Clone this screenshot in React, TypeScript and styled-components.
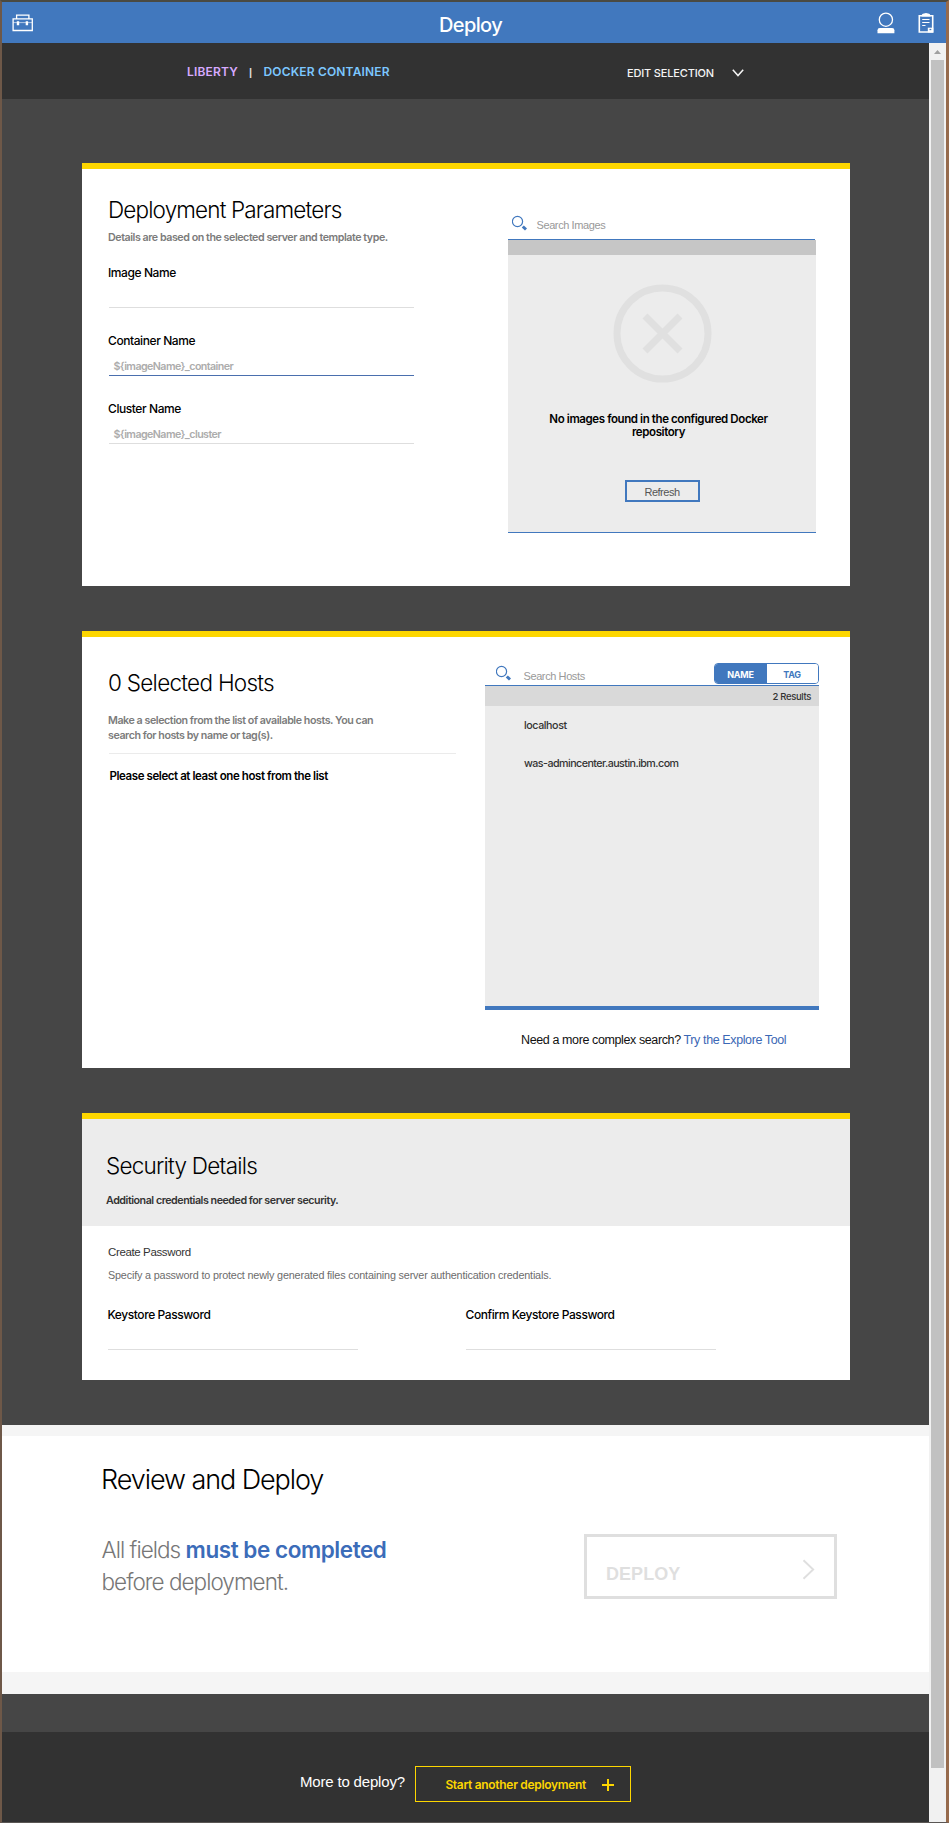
import React from "react";
import styled, { createGlobalStyle } from "styled-components";

const blue = "#4178be";
const ui = `Inter, "Liberation Sans", sans-serif`;
const plain = `"Liberation Sans", Arial, sans-serif`;

const GlobalStyle = createGlobalStyle`
  *, *::before, *::after { box-sizing: border-box; }
  body { margin: 0; background: #464646; }
  h1, h2, p { margin: 0; font-weight: inherit; }
  button { margin: 0; padding: 0; font: inherit; }
  svg { display: block; flex: none; }
`;

/* ---------- window frame ---------- */

const Window = styled.div`
  width: 949px;
  height: 1823px;
  display: flex;
  flex-direction: column;
  overflow: hidden;
  border-style: solid;
  border-width: 2px 3px 1px 2px;
  border-color: #4a4a42 #966a4c #5a5654 #6e5848;
  background: #464646;
  font-family: ${ui};
  color: #000;
`;

const Header = styled.header`
  flex: none;
  height: 41px;
  display: grid;
  grid-template-columns: 1fr auto 1fr;
  align-items: center;
  padding: 0 12px 0 10px;
  background: ${blue};
  color: #fff;
`;

const Title = styled.h1`
  font-size: 20px;
  line-height: 24px;
  font-weight: 500;
  letter-spacing: -0.62px;
  padding: 5px 5px 0 0;
`;

const HeaderActions = styled.div`
  display: flex;
  justify-content: flex-end;
  gap: 23px;
  padding-top: 1px;
`;

const Body = styled.div`
  flex: 1;
  min-height: 0;
  display: flex;
`;

const Page = styled.main`
  width: 927px;
  display: flex;
  flex-direction: column;
`;

const Scrollbar = styled.div`
  width: 17px;
  padding: 0 2px;
  background: #f1f1f1;
`;

const ScrollArrow = styled.div`
  height: 17px;
  display: flex;
  align-items: center;
  justify-content: center;
`;

const ScrollThumb = styled.div`
  height: 1708px;
  background: #c1c1c1;
`;

/* ---------- selection bar ---------- */

const SelectionBar = styled.nav`
  flex: none;
  height: 56px;
  display: flex;
  align-items: center;
  padding-left: 185px;
  background: #323232;
  font-size: 12px;
  line-height: 16px;
  font-weight: 600;
  color: #ddd;
`;

const Crumbs = styled.div`
  width: 440px;
  display: flex;
  padding-top: 1px;
  letter-spacing: 0.17px;
`;

const Crumb = styled.span<{ $color: string }>`
  color: ${(p) => p.$color};
`;

const Divider = styled.span`
  width: 25.5px;
  text-align: center;
  font-family: ${plain};
  font-size: 11px;
  font-weight: 700;
`;

const EditSelection = styled.div`
  display: flex;
  align-items: center;
  gap: 18px;
  padding-top: 3px;
  font-size: 11px;
  font-weight: 500;
  letter-spacing: -0.17px;
  color: #f5f5f5;
`;

/* ---------- cards ---------- */

const Cards = styled.div`
  flex: none;
  display: flex;
  flex-direction: column;
  gap: 45px;
  padding: 64px 79px 45px 80px;
`;

const Card = styled.section<{ $height: number }>`
  height: ${(p) => p.$height}px;
  display: flex;
  border-top: 6px solid #fdd600;
  background: #fff;
`;

const StackedCard = styled(Card)`
  flex-direction: column;
`;

const LeftColumn = styled.div<{ $width: number; $top: number }>`
  width: ${(p) => p.$width}px;
  padding: ${(p) => p.$top}px 0 0 26.5px;
`;

const RightColumn = styled.div<{ $width: number; $top: number }>`
  width: ${(p) => p.$width}px;
  padding-top: ${(p) => p.$top}px;
`;

const Heading = styled.h2<{ $track?: number }>`
  margin-left: -0.5px;
  font-size: 22.5px;
  line-height: 30px;
  font-weight: 300;
  letter-spacing: ${(p) => p.$track ?? -0.85}px;
`;

const Hint = styled.p<{ $top: number; $line?: number }>`
  margin-top: ${(p) => p.$top}px;
  margin-left: -0.5px;
  font-size: 10.7px;
  line-height: ${(p) => p.$line ?? 16}px;
  font-weight: 600;
  letter-spacing: -0.45px;
  color: #7b7b7b;
`;

const StrongHint = styled(Hint)`
  letter-spacing: -0.46px;
  color: #333;
`;

const Notice = styled.p`
  font-size: 11.5px;
  font-weight: 600;
  letter-spacing: -0.42px;
`;

/* ---------- form fields ---------- */

const Field = styled.label<{ $top: number; $width: number }>`
  display: block;
  width: ${(p) => p.$width}px;
  margin-top: ${(p) => p.$top}px;
`;

const FieldLabel = styled.span`
  display: block;
  margin-left: -0.5px;
  font-size: 12px;
  line-height: 16px;
  font-weight: 500;
  letter-spacing: -0.42px;
`;

const FieldInput = styled.span<{ $active?: boolean }>`
  display: block;
  height: 27px;
  padding: 10px 0 0 5px;
  border-bottom: 1px solid ${(p) => (p.$active ? "#4a6fae" : "#dedede")};
  font-size: 10.7px;
  line-height: 16px;
  font-weight: 600;
  letter-spacing: -0.58px;
  color: #acacac;
`;

/* ---------- search panels ---------- */

const SearchRow = styled.div<{ $width: number; $icon: number; $gap: number }>`
  width: ${(p) => p.$width}px;
  height: 30px;
  display: flex;
  padding: 5px 0 0 ${(p) => p.$icon}px;
  gap: ${(p) => p.$gap}px;
  border-bottom: 1px solid ${blue};
`;

const SearchIconBox = styled.span<{ $top: number }>`
  flex: none;
  padding-top: ${(p) => p.$top}px;
`;

const SearchText = styled.span<{ $top: number }>`
  flex: 1;
  padding-top: ${(p) => p.$top}px;
  font-family: ${plain};
  font-size: 11px;
  line-height: 16px;
  letter-spacing: -0.4px;
  color: #999;
`;

const PanelBar = styled.div`
  height: 15px;
  background: #c6c6c6;
`;

const EmptyPanel = styled.div`
  height: 278px;
  display: flex;
  flex-direction: column;
  align-items: center;
  padding-top: 29px;
  background: #ececec;
  border-bottom: 1px solid ${blue};
`;

const EmptyText = styled(Notice)`
  width: 240px;
  margin: 30px 7px 41px 0;
  line-height: 13px;
  letter-spacing: -0.4px;
  text-align: center;
`;

const RefreshButton = styled.button`
  width: 75px;
  height: 22px;
  padding-top: 2px;
  border: 2px solid ${blue};
  background: transparent;
  font-family: ${plain};
  font-size: 11px;
  line-height: 16px;
  letter-spacing: -0.5px;
  color: #555;
`;

const Rule = styled.hr`
  width: 347px;
  margin: 10px 0 14px;
  border: 0;
  border-top: 1px solid #ebebeb;
`;

const HostNotice = styled(Notice)`
  padding-left: 1px;
  line-height: 16px;
`;

const Toggle = styled.div`
  width: 105px;
  height: 21px;
  display: flex;
  margin-top: 2px;
  overflow: hidden;
  border: 1px solid ${blue};
  border-radius: 4px;
`;

const ToggleItem = styled.span<{ $on?: boolean }>`
  flex: ${(p) => (p.$on ? "0 0 52px" : "1")};
  padding-right: 1px;
  text-align: center;
  font-size: 9px;
  line-height: 21px;
  font-weight: 700;
  letter-spacing: -0.2px;
  background: ${(p) => (p.$on ? blue : "#fff")};
  color: ${(p) => (p.$on ? "#fff" : blue)};
`;

const ResultCount = styled.div`
  height: 20px;
  padding-right: 8px;
  background: #d9d9d9;
  text-align: right;
  font-size: 9.5px;
  line-height: 22px;
  font-weight: 500;
  letter-spacing: -0.36px;
  color: #333;
`;

const HostList = styled.div`
  height: 304px;
  background: #ececec;
  border-bottom: 4px solid ${blue};
`;

const Host = styled.div<{ $track: number }>`
  height: 38px;
  padding-left: 39px;
  font-size: 10.7px;
  line-height: 40px;
  font-weight: 500;
  letter-spacing: ${(p) => p.$track}px;
  color: #333;
`;

const ExploreLine = styled.p`
  margin-top: 20px;
  padding-left: 36px;
  font-family: ${plain};
  font-size: 12.5px;
  line-height: 20px;
  letter-spacing: -0.39px;
  white-space: nowrap;
  color: #111;
`;

const ExploreLink = styled.a`
  color: #3b68b5;
`;

/* ---------- security ---------- */

const SecurityHeader = styled.div`
  flex: none;
  height: 107px;
  padding: 32px 0 0 24.5px;
  background: #ececec;
`;

const SecurityBody = styled.div`
  padding: 18px 0 0 26px;
`;

const SubHeading = styled.p`
  font-family: ${plain};
  font-size: 11.5px;
  line-height: 16px;
  letter-spacing: -0.37px;
  color: #333;
`;

const SubText = styled.p`
  margin-top: 7px;
  font-family: ${plain};
  font-size: 10.8px;
  line-height: 16px;
  letter-spacing: -0.17px;
  color: #6c6c6c;
`;

const PasswordFields = styled.div`
  display: flex;
  gap: 108px;
`;

/* ---------- review ---------- */

const Review = styled.section`
  flex: none;
  height: 269px;
  padding: 26px 0 0 99.5px;
  border-top: 11px solid #f5f5f5;
  border-bottom: 22px solid #f5f5f5;
  background: #fff;
`;

const ReviewHeading = styled.h2`
  margin-left: -0.5px;
  font-size: 27px;
  line-height: 36px;
  font-weight: 300;
  letter-spacing: -1.08px;
`;

const ReviewRow = styled.div`
  display: flex;
  align-items: flex-start;
  margin-top: 36px;
`;

const ReviewText = styled.p`
  width: 482.5px;
  font-size: 22.5px;
  line-height: 32px;
  font-weight: 300;
  letter-spacing: -0.97px;
  color: #777;
`;

const Required = styled.strong`
  font-weight: 600;
  letter-spacing: -0.45px;
  color: #3b6cb9;
`;

const DeployButton = styled.button`
  width: 253px;
  height: 65px;
  display: flex;
  align-items: flex-start;
  justify-content: space-between;
  padding: 22px 19px 0 19px;
  border: 3px solid #dfdfdf;
  background: transparent;
  font-family: ${plain};
  font-size: 18px;
  line-height: 24px;
  font-weight: 700;
  letter-spacing: 0.05px;
  color: #dfdfdf;
`;

const DeployLabel = styled.span`
  padding-top: 3px;
`;

/* ---------- footer ---------- */

const Footer = styled.footer`
  flex: none;
  height: 90px;
  display: flex;
  align-items: center;
  gap: 10.5px;
  margin-top: 38px;
  padding: 14px 0 0 298px;
  background: #323232;
`;

const FooterText = styled.span`
  padding-bottom: 4px;
  font-family: ${plain};
  font-size: 15px;
  line-height: 20px;
  letter-spacing: -0.18px;
  color: #fff;
`;

const StartButton = styled.button`
  width: 216px;
  height: 36px;
  display: flex;
  align-items: center;
  gap: 16px;
  padding: 1px 0 0 29px;
  border: 1px solid #fdd600;
  background: transparent;
  font-size: 12px;
  font-weight: 600;
  letter-spacing: -0.31px;
  color: #fdd600;
`;

/* ---------- icons ---------- */

const ToolboxIcon = () => (
  <svg width="22" height="19" viewBox="0 0 22 19" fill="none" stroke="#fff" strokeWidth="1.3">
    <path d="M4.6 5.500V2.100h12.300v3.400M1.100 5.900h19.200v11.600H1.100z" />
    <path d="M1.100 9.600h19.200" strokeWidth=".8" opacity=".75" />
    <path d="M6 8.200v4M14.900 8.200v4" strokeWidth="2.400" />
  </svg>
);

const UserIcon = () => (
  <svg width="18" height="22" viewBox="0 0 18 22">
    <circle cx="8.900" cy="7.700" r="6.600" fill="none" stroke="#fff" strokeWidth="1.300" />
    <path d="M.5 21.200v-2.900q0-2.300 2.300-2.300h12.300q2.300 0 2.300 2.300v2.900z" fill="#fff" />
  </svg>
);

const ClipboardIcon = () => (
  <svg width="16" height="22" viewBox="0 0 16 22">
    <path d="M3.500 4.500q0-3 2.500-3Q8 .3 10 1.500q2.500 0 2.500 3z" fill="#fff" />
    <path d="M1.300 3.700h13.400v16.300H1.300z" fill="none" stroke="#fff" strokeWidth="1.600" />
    <path d="M4.200 7.500h7.300M4.200 10.500h7.300M4.200 13.500h3.300" stroke="#fff" strokeWidth="1.100" />
    <path d="M9.800 20.500v-4.800h5.500v4.800z" fill="#fff" />
    <path d="M11.500 17.500h1.800" stroke="#4178be" strokeWidth="1.300" />
  </svg>
);

const SearchIcon = () => (
  <svg width="16" height="17" viewBox="0 0 16 17" fill="none" stroke={blue}>
    <circle cx="5.500" cy="6.500" r="5.100" strokeWidth="1.200" />
    <path d="M10.800 11.500l3.200 3" strokeWidth="3" />
  </svg>
);

const ChevronDown = () => (
  <svg width="12" height="8" viewBox="0 0 12 8" fill="none" stroke="#f5f5f5" strokeWidth="1.500">
    <path d="M.8.8L6 6.600 11.200.8" />
  </svg>
);

const ChevronRight = () => (
  <svg width="13" height="21" viewBox="0 0 13 21" fill="none" stroke="#dfdfdf" strokeWidth="1.900">
    <path d="M1.500 1.200L11.200 10.500 1.500 19.800" />
  </svg>
);

const NoImagesIcon = () => (
  <svg width="99" height="99" viewBox="0 0 99 99" fill="none" stroke="#e0e0e0" strokeWidth="7">
    <circle cx="49.500" cy="49.500" r="45.500" />
    <path d="M32 32l35 35M67 32L32 67" />
  </svg>
);

const PlusIcon = () => (
  <svg width="12" height="12" viewBox="0 0 12 12" stroke="#fdd600" strokeWidth="2">
    <path d="M6 0v12M0 6h12" />
  </svg>
);

const ArrowUp = () => (
  <svg width="7" height="4" viewBox="0 0 7 4">
    <path d="M3.500 0L7 4H0z" fill="#a0a0a0" />
  </svg>
);

/* ---------- page ---------- */

const hosts = [
  { name: "localhost", track: -0.42 },
  { name: "was-admincenter.austin.ibm.com", track: -0.54 },
];

export default function App() {
  return (
    <Window>
      <GlobalStyle />
      <Header>
        <ToolboxIcon />
        <Title>Deploy</Title>
        <HeaderActions>
          <UserIcon />
          <ClipboardIcon />
        </HeaderActions>
      </Header>
      <Body>
        <Page>
          <SelectionBar>
            <Crumbs>
              <Crumb $color="#d7aaff">LIBERTY</Crumb>
              <Divider>|</Divider>
              <Crumb $color="#7cc7ff">DOCKER CONTAINER</Crumb>
            </Crumbs>
            <EditSelection>
              EDIT SELECTION
              <ChevronDown />
            </EditSelection>
          </SelectionBar>

          <Cards>
            <Card $height={423}>
              <LeftColumn $width={426} $top={26}>
                <Heading>Deployment Parameters</Heading>
                <Hint $top={5}>Details are based on the selected server and template type.</Hint>
                <Field $top={19} $width={305}>
                  <FieldLabel>Image Name</FieldLabel>
                  <FieldInput />
                </Field>
                <Field $top={25} $width={305}>
                  <FieldLabel>Container Name</FieldLabel>
                  <FieldInput $active>{"${imageName}_container"}</FieldInput>
                </Field>
                <Field $top={25} $width={305}>
                  <FieldLabel>Cluster Name</FieldLabel>
                  <FieldInput>{"${imageName}_cluster"}</FieldInput>
                </Field>
              </LeftColumn>
              <RightColumn $width={308} $top={41}>
                <SearchRow $width={307} $icon={4} $gap={8.5}>
                  <SearchIconBox $top={0}>
                    <SearchIcon />
                  </SearchIconBox>
                  <SearchText $top={2}>Search Images</SearchText>
                </SearchRow>
                <PanelBar />
                <EmptyPanel>
                  <NoImagesIcon />
                  <EmptyText>No images found in the configured Docker repository</EmptyText>
                  <RefreshButton>Refresh</RefreshButton>
                </EmptyPanel>
              </RightColumn>
            </Card>

            <Card $height={437}>
              <LeftColumn $width={403} $top={31}>
                <Heading $track={-0.72}>0 Selected Hosts</Heading>
                <Hint $top={15} $line={15}>
                  Make a selection from the list of available hosts. You can
                  <br />
                  search for hosts by name or tag(s).
                </Hint>
                <Rule />
                <HostNotice>Please select at least one host from the list</HostNotice>
              </LeftColumn>
              <RightColumn $width={334} $top={19}>
                <SearchRow $width={334} $icon={11} $gap={11.5}>
                  <SearchIconBox $top={4}>
                    <SearchIcon />
                  </SearchIconBox>
                  <SearchText $top={7}>Search Hosts</SearchText>
                  <Toggle>
                    <ToggleItem $on>NAME</ToggleItem>
                    <ToggleItem>TAG</ToggleItem>
                  </Toggle>
                </SearchRow>
                <ResultCount>2 Results</ResultCount>
                <HostList>
                  {hosts.map((h) => (
                    <Host key={h.name} $track={h.track}>
                      {h.name}
                    </Host>
                  ))}
                </HostList>
                <ExploreLine>
                  Need a more complex search? <ExploreLink>Try the Explore Tool</ExploreLink>
                </ExploreLine>
              </RightColumn>
            </Card>

            <StackedCard $height={267}>
              <SecurityHeader>
                <Heading $track={-0.76}>Security Details</Heading>
                <StrongHint $top={12}>Additional credentials needed for server security.</StrongHint>
              </SecurityHeader>
              <SecurityBody>
                <SubHeading>Create Password</SubHeading>
                <SubText>
                  Specify a password to protect newly generated files containing server authentication
                  credentials.
                </SubText>
                <PasswordFields>
                  <Field $top={24} $width={250}>
                    <FieldLabel>Keystore Password</FieldLabel>
                    <FieldInput />
                  </Field>
                  <Field $top={24} $width={250}>
                    <FieldLabel>Confirm Keystore Password</FieldLabel>
                    <FieldInput />
                  </Field>
                </PasswordFields>
              </SecurityBody>
            </StackedCard>
          </Cards>

          <Review>
            <ReviewHeading>Review and Deploy</ReviewHeading>
            <ReviewRow>
              <ReviewText>
                All fields <Required>must be completed</Required>
                <br />
                before deployment.
              </ReviewText>
              <DeployButton>
                <DeployLabel>DEPLOY</DeployLabel>
                <ChevronRight />
              </DeployButton>
            </ReviewRow>
          </Review>

          <Footer>
            <FooterText>More to deploy?</FooterText>
            <StartButton>
              Start another deployment
              <PlusIcon />
            </StartButton>
          </Footer>
        </Page>
        <Scrollbar>
          <ScrollArrow>
            <ArrowUp />
          </ScrollArrow>
          <ScrollThumb />
        </Scrollbar>
      </Body>
    </Window>
  );
}
